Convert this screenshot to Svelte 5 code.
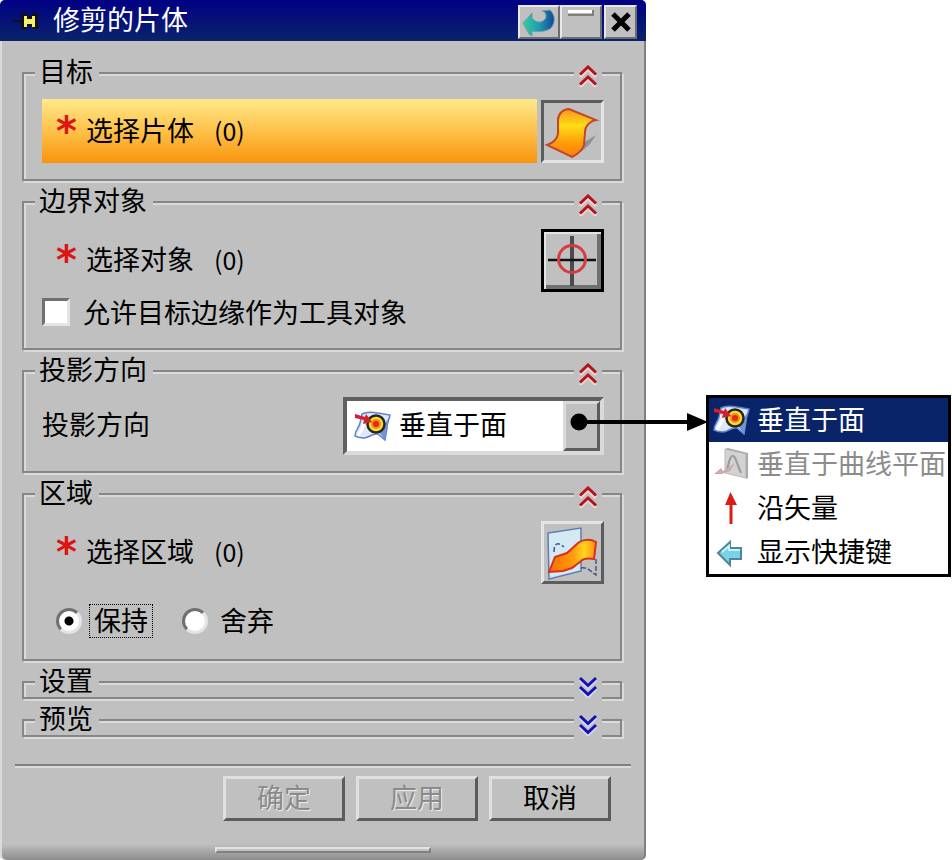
<script>
let open = $state({
     target: true,
     boundary: true,
     direction: true,
     region: true,
     settings: false,
     preview: false
});
let allowEdges = $state(false);
let keep = $state('keep');
let direction = $state('face');

const directions = [
     { id: 'face', name: '垂直于面', disabled: false },
     { id: 'curve', name: '垂直于曲线平面', disabled: true },
     { id: 'vector', name: '沿矢量', disabled: false },
     { id: 'keys', name: '显示快捷键', disabled: false }
];

function toggle(id) {
     open[id] = !open[id];
}
</script>

{#snippet heading(id, title)}
     <header>
          <h2>{title}</h2>
          <button class="fold" class:closed={!open[id]} type="button" aria-label={title} aria-expanded={open[id]} onclick={() => toggle(id)}>
               <svg width="18" height="22" viewBox="0 0 18 22" aria-hidden="true">
                    {#if open[id]}
                         <path class="halo" d="M1 12 9 4l8 8M1 22l8-8 8 8" />
                         <path d="M1 9.500 9 2l8 7.500M1 19.500 9 12l8 7.500" />
                    {:else}
                         <path class="halo" d="M1 4l8 8 8-8M1 13l8 8 8-8" />
                         <path d="M1 2l8 7.500L17 2M1 11l8 7.500L17 11" />
                    {/if}
               </svg>
          </button>
     </header>
{/snippet}

{#snippet pick(text)}
     <span class="star">*</span>
     <span>{text}</span>
     <span class="count">(0)</span>
{/snippet}

{#snippet faceIcon()}
     <svg width="37" height="30" viewBox="0 0 37 30" aria-hidden="true">
          <path d="M8 3c5-3 11-2 16-1l12 2c-1 5-3 8-3 13l-2 12-7-6c-6-1-9 4-14 4-4 0-7-1-9-2 0-6 4-8 5-13z" fill="#dfe8fa" stroke="#5c82cf" stroke-width="1.500" />
          <path d="m25 21 9-13-3 21z" fill="#7292da" />
          <path d="M4 25c2-5 5-6 6-13" fill="none" stroke="#fff" stroke-width="3" />
          <circle cx="22" cy="13" r="8.500" fill="#f7dc35" stroke="#27281a" stroke-width="2.500" />
          <circle cx="22" cy="13" r="4" fill="#e32a12" stroke="#f18b21" stroke-width="2" />
          <path d="M1 3l10 3 1-3 6 8-9 2 1-4L1 7z" fill="#d61d29" />
     </svg>
{/snippet}

<main>
     <section class="dialog" aria-label="修剪的片体">
          <div class="titlebar">
               <svg width="26" height="18" viewBox="0 0 26 18" aria-hidden="true">
                    <path d="M0 9h9" stroke="#111" stroke-width="2" />
                    <path d="M8 1h5l2 3h4l2-3h4v16h-4l-2-3h-4l-2 3H8z" fill="#111" />
                    <path d="M11 4h3v3h5V4h3v11h-3v-3h-5v3h-3z" fill="#f5f16b" />
               </svg>
               <h1>修剪的片体</h1>
               <button type="button" aria-label="重置">
                    <svg width="36" height="30" viewBox="0 0 36 30" aria-hidden="true">
                         <defs>
                              <linearGradient id="teal">
                                   <stop offset="0" stop-color="#35cf9c" />
                                   <stop offset=".5" stop-color="#209cae" />
                                   <stop offset="1" stop-color="#15449c" />
                              </linearGradient>
                         </defs>
                         <path d="M2 16 11 6v5c5 7 14 4 14-2 0-3-1-4-4-5l8-1c5 5 6 12 1 18-5 4-13 4-19 3v5l-3-2z" fill="url(#teal)" stroke="#6d9daa" />
                    </svg>
               </button>
               <button type="button" aria-label="最小化">
                    <svg width="36" height="30" viewBox="0 0 36 30" aria-hidden="true">
                         <path d="M5 8h25V3" fill="none" stroke="#808080" stroke-width="2" />
                         <path d="M5 3h24v3H5z" fill="#fff" />
                    </svg>
               </button>
               <button class="close" type="button" aria-label="关闭">
                    <svg width="20" height="20" viewBox="0 0 20 20" aria-hidden="true">
                         <path d="m2 2 16 16M18 2 2 18" stroke="#000" stroke-width="5" />
                    </svg>
               </button>
          </div>

          <div class="groups">
               <section class="group">
                    {@render heading('target', '目标')}
                    {#if open.target}
                         <div class="body">
                              <div class="row">
                                   <div class="pick active">{@render pick('选择片体')}</div>
                                   <button class="tool pressed" type="button" aria-label="选择片体">
                                        <svg width="56" height="56" viewBox="0 0 56 56" aria-hidden="true">
                                             <defs>
                                                  <linearGradient id="sheet" x2="0" y2="1">
                                                       <stop offset="0" stop-color="#f7941c" />
                                                       <stop offset=".35" stop-color="#ffdd16" />
                                                       <stop offset=".65" stop-color="#ffa50a" />
                                                       <stop offset="1" stop-color="#fb7a0b" />
                                                  </linearGradient>
                                             </defs>
                                             <path d="M39 40 52 32l-6 9-9 8z" fill="#8f9296" />
                                             <path d="M3 42C9 40 13 36 14 31V17C14 11 19 6 25 6L52 17C46 18 41 23 41 29L40 42C38 48 34 51 28 54z" fill="url(#sheet)" stroke="#c6442a" stroke-width="2" />
                                        </svg>
                                   </button>
                              </div>
                         </div>
                    {/if}
               </section>

               <section class="group">
                    {@render heading('boundary', '边界对象')}
                    {#if open.boundary}
                         <div class="body">
                              <div class="row">
                                   <div class="pick">{@render pick('选择对象')}</div>
                                   <button class="tool current" type="button" aria-label="选择对象">
                                        <svg width="56" height="56" viewBox="0 0 56 56" aria-hidden="true">
                                             <path d="M28 4v50" stroke="#4b4b4b" stroke-width="4" />
                                             <path d="M4 28h48" stroke="#111" stroke-width="2.500" />
                                             <circle cx="28" cy="27" r="13.500" fill="none" stroke="#d43d40" stroke-width="3" />
                                        </svg>
                                   </button>
                              </div>
                              <label class="check">
                                   <input type="checkbox" bind:checked={allowEdges}>
                                   <span>允许目标边缘作为工具对象</span>
                              </label>
                         </div>
                    {/if}
               </section>

               <section class="group">
                    {@render heading('direction', '投影方向')}
                    {#if open.direction}
                         <div class="body">
                              <div class="row spread">
                                   <label class="name" for="direction">投影方向</label>
                                   <div class="combo">
                                        <select id="direction" bind:value={direction}>
                                             {#each directions as item}
                                                  <option value={item.id} disabled={item.disabled}>{item.name}</option>
                                             {/each}
                                        </select>
                                        <span class="combo-icon">{@render faceIcon()}</span>
                                        <span class="combo-button"></span>
                                        <svg class="pointer" width="138" height="18" viewBox="0 0 138 18" aria-hidden="true">
                                             <circle cx="9" cy="9" r="8.500" />
                                             <path d="M9 7h108V0l21 9-21 9v-7H9z" />
                                        </svg>
                                        <ul class="menu">
                                             {#each directions as item}
                                                  <li>
                                                       <button type="button" class:selected={direction == item.id} disabled={item.disabled} onclick={() => direction = item.id}>
                                                            {#if item.id == 'face'}
                                                                 {@render faceIcon()}
                                                            {:else if item.id == 'curve'}
                                                                 <svg width="37" height="34" viewBox="0 0 37 34" aria-hidden="true">
                                                                      <path d="m12 2 21 5v24L12 26z" fill="#d2d2d2" stroke="#b9b9b9" />
                                                                      <path d="m12 2 3-1 20 5v25l-2 1V7z" fill="#aaa" />
                                                                      <path d="M14 23c2-7 2-12 5-14s5 8 9 17" fill="none" stroke="#999" stroke-width="2" />
                                                                      <path d="m1 27 7-6 2 3 12-8-5 8-8 3z" fill="#d0a9ab" />
                                                                 </svg>
                                                            {:else if item.id == 'vector'}
                                                                 <svg width="37" height="34" viewBox="0 0 37 34" aria-hidden="true">
                                                                      <path d="M17.500 1 24 14h-4.500v19h-3V14H12z" fill="#d91d16" />
                                                                 </svg>
                                                            {:else}
                                                                 <svg width="37" height="34" viewBox="0 0 37 34" aria-hidden="true">
                                                                      <path d="M5 18 17 7v6h11v11H17v6z" fill="#79d2e6" stroke="#50849a" stroke-width="2" />
                                                                      <path d="M9 17l7-6v4h11" fill="none" stroke="#c6f3fa" stroke-width="2" />
                                                                 </svg>
                                                            {/if}
                                                            <span>{item.name}</span>
                                                       </button>
                                                  </li>
                                             {/each}
                                        </ul>
                                   </div>
                              </div>
                         </div>
                    {/if}
               </section>

               <section class="group">
                    {@render heading('region', '区域')}
                    {#if open.region}
                         <div class="body">
                              <div class="row">
                                   <div class="pick">{@render pick('选择区域')}</div>
                                   <button class="tool" type="button" aria-label="选择区域">
                                        <svg width="56" height="56" viewBox="0 0 56 56" aria-hidden="true">
                                             <defs>
                                                  <linearGradient id="ribbon">
                                                       <stop offset="0" stop-color="#fa6d08" />
                                                       <stop offset=".5" stop-color="#ff9a0e" />
                                                       <stop offset=".75" stop-color="#ffd51f" />
                                                       <stop offset="1" stop-color="#fb8b12" />
                                                  </linearGradient>
                                             </defs>
                                             <path d="M4 9 37 4v43L5 55z" fill="#d3eaf5" stroke="#627bb4" stroke-width="1.500" />
                                             <path d="M10 28c0-8 3-11 10-5M37 44c7-1 9 3 15 7V35" fill="none" stroke="#4d5583" stroke-width="1.500" stroke-dasharray="5 2" />
                                             <path d="M5 48 11 33 23 29 34 19C39 15 47 15 52 18L50 35C44 34 40 34 37 37L28 44 19 47z" fill="url(#ribbon)" stroke="#d9301a" stroke-width="2" />
                                        </svg>
                                   </button>
                              </div>
                              <div class="radios">
                                   <label>
                                        <input type="radio" value="keep" bind:group={keep}>
                                        <span class:focus={keep == 'keep'}>保持</span>
                                   </label>
                                   <label>
                                        <input type="radio" value="drop" bind:group={keep}>
                                        <span class:focus={keep == 'drop'}>舍弃</span>
                                   </label>
                              </div>
                         </div>
                    {/if}
               </section>

               <section class="group">
                    {@render heading('settings', '设置')}
               </section>

               <section class="group">
                    {@render heading('preview', '预览')}
               </section>
          </div>

          <footer>
               <div class="actions">
                    <button type="button" disabled>确定</button>
                    <button type="button" disabled>应用</button>
                    <button type="button">取消</button>
               </div>
               <div class="grip"></div>
          </footer>
     </section>
</main>

<style>
:global(body) {
     margin: 0;
     background: #fff;
}
main {
     display: grid;
     grid-template-columns: 19fr 9fr;
     align-items: start;
     font-family: "Noto Sans CJK SC", sans-serif;
     font-size: 27px;
     line-height: 28px;
     color: #000;
}
main * {
     box-sizing: border-box;
}
h1, h2 {
     margin: 0;
     font-size: 27px;
     font-weight: 400;
}
button, select {
     font: inherit;
     color: inherit;
     margin: 0;
     padding: 0;
}
svg {
     display: block;
     flex-shrink: 0;
}
.dialog {
     background: linear-gradient(#c0c0c000 calc(100% - 16px), #8c8c8c), #c0c0c0;
     box-shadow: inset 2px 0 #dadada, inset -2px 0 #808080;
     border-radius: 5px;
}

.titlebar {
     display: flex;
     align-items: center;
     height: 41px;
     padding: 0 9px 0 13px;
     background: linear-gradient(#000084, #0a246a);
     border-radius: 5px 5px 0 0;
     color: #fff;
}
.titlebar h1 {
     flex: 1;
     margin-left: 14px;
     padding-bottom: 4px;
}
.titlebar button {
     display: flex;
     align-items: center;
     justify-content: center;
     width: 42px;
     height: 34px;
     margin-top: 3px;
     background: #c0c0c0;
     border: 2px solid;
     border-color: #e8e8e8 #6c6c6c #6c6c6c #e8e8e8;
}
.titlebar .close {
     width: 33px;
     margin-left: 2px;
}

.groups {
     display: flex;
     flex-direction: column;
     gap: 20px;
     padding: 31px 24px 27px 22px;
}
.group {
     padding-bottom: 2px;
     border: 2px solid #868686;
     box-shadow: inset 2px 2px #dadada, 2px 2px #dadada;
}
header {
     display: flex;
     align-items: flex-start;
     justify-content: space-between;
     height: 28px;
     margin-top: -16px;
     padding: 0 18px 0 11px;
}
h2 {
     padding: 0 6px 2px 4px;
     margin-top: -1px;
     background: #c0c0c0;
}
.fold {
     width: 28px;
     height: 30px;
     padding: 6px 5px 0;
     background: #c0c0c0;
     border: none;
}
.fold.closed {
     height: 34px;
}
.fold path {
     fill: none;
     stroke: #b3131d;
     stroke-width: 3;
}
.fold.closed path {
     stroke: #1212b4;
}
.fold path.halo {
     stroke: #f3d9d3;
}
.fold.closed path.halo {
     stroke: #d8d8f0;
}
.body {
     padding: 13px 16px 14px 18px;
}
.row {
     display: flex;
     align-items: center;
     gap: 4px;
}
.spread {
     justify-content: space-between;
}
.name {
     padding-bottom: 4px;
}
.pick {
     flex: 1;
     display: flex;
     align-items: center;
     height: 64px;
     padding: 0 0 3px 14px;
}
.active {
     background: linear-gradient(#ffe98a, #fdbd43 55%, #f9930d);
}
.star {
     width: 30px;
     height: 28px;
     font-family: "DejaVu Sans", sans-serif;
     font-size: 40px;
     font-weight: 700;
     line-height: 30px;
     color: #dc1414;
}
.count {
     margin-left: 20px;
     font-size: 25px;
}
.tool {
     width: 63px;
     height: 63px;
     background: #c0c0c0;
     border: 3px solid;
     border-color: #e4e4e4 #5c5c5c #5c5c5c #e4e4e4;
}
.pressed {
     border-color: #5c5c5c #e4e4e4 #e4e4e4 #5c5c5c;
}
.current {
     border-color: #000;
     box-shadow: inset 2px 2px #e4e4e4, inset -4px -4px #707070;
}
.check {
     display: flex;
     align-items: center;
     gap: 13px;
     height: 40px;
}
input {
     appearance: none;
     flex-shrink: 0;
     margin: 0;
     background: #fff;
     border: 3px solid;
     border-color: #707070 #e4e4e4 #e4e4e4 #707070;
}
input[type="checkbox"] {
     width: 28px;
     height: 28px;
}
input[type="checkbox"]:checked {
     box-shadow: inset 0 0 0 5px #fff;
     background: #000;
}
input[type="radio"] {
     width: 26px;
     height: 26px;
     border-radius: 50%;
}
input[type="radio"]:checked {
     background: radial-gradient(circle, #000 4px, #fff 5px);
}
.radios {
     display: flex;
     gap: 29px;
     padding: 20px 0 5px 14px;
}
.radios label {
     display: flex;
     align-items: center;
     gap: 7px;
}
.radios span {
     padding: 1px 4px 3px;
     border: 1px dotted transparent;
}
.radios .focus {
     border-color: #000;
}

.combo {
     position: relative;
     width: 261px;
}
select {
     display: block;
     width: 100%;
     height: 58px;
     padding: 0 40px 4px 52px;
     appearance: none;
     background: #fff;
     border: 4px solid;
     border-color: #606060 #dadada #dadada #606060;
     border-radius: 0;
}
.combo-icon {
     position: absolute;
     top: 14px;
     left: 11px;
     pointer-events: none;
}
.combo-button {
     position: absolute;
     top: 4px;
     right: 4px;
     bottom: 4px;
     width: 37px;
     background: #c0c0c0;
     border: 3px solid;
     border-color: #dadada #5c5c5c #5c5c5c #dadada;
     pointer-events: none;
}
.pointer {
     position: absolute;
     top: 16px;
     left: calc(100% - 34px);
     z-index: 2;
     pointer-events: none;
}
.menu {
     position: absolute;
     top: -2px;
     left: calc(100% + 102px);
     width: 245px;
     margin: 0;
     padding: 0;
     list-style: none;
     background: #fff;
     border: 3px solid #000;
}
.menu button {
     display: flex;
     align-items: center;
     gap: 7px;
     width: 100%;
     height: 44px;
     padding: 0 0 0 4px;
     background: none;
     border: none;
     white-space: nowrap;
}
.menu span {
     padding-bottom: 3px;
}
.menu .selected {
     background: #0a246a;
     color: #fff;
}
.menu button:disabled {
     color: #8c8c8c;
}

footer {
     padding: 0 15px 7px;
}
.actions {
     display: flex;
     justify-content: flex-end;
     gap: 11px;
     padding: 10px 20px 26px 0;
     border-top: 2px solid #808080;
     box-shadow: inset 0 2px #dadada;
}
.actions button {
     width: 122px;
     height: 45px;
     padding-bottom: 4px;
     background: #c0c0c0;
     border: 3px solid;
     border-color: #e0e0e0 #5c5c5c #5c5c5c #e0e0e0;
}
.actions button:disabled {
     color: #8a8a8a;
     text-shadow: 1px 1px #ececec;
}
.grip {
     width: 35%;
     height: 6px;
     margin: 0 auto;
     background: #c0c0c0;
     border: 2px solid;
     border-color: #e4e4e4 #808080 #808080 #e4e4e4;
}
</style>
